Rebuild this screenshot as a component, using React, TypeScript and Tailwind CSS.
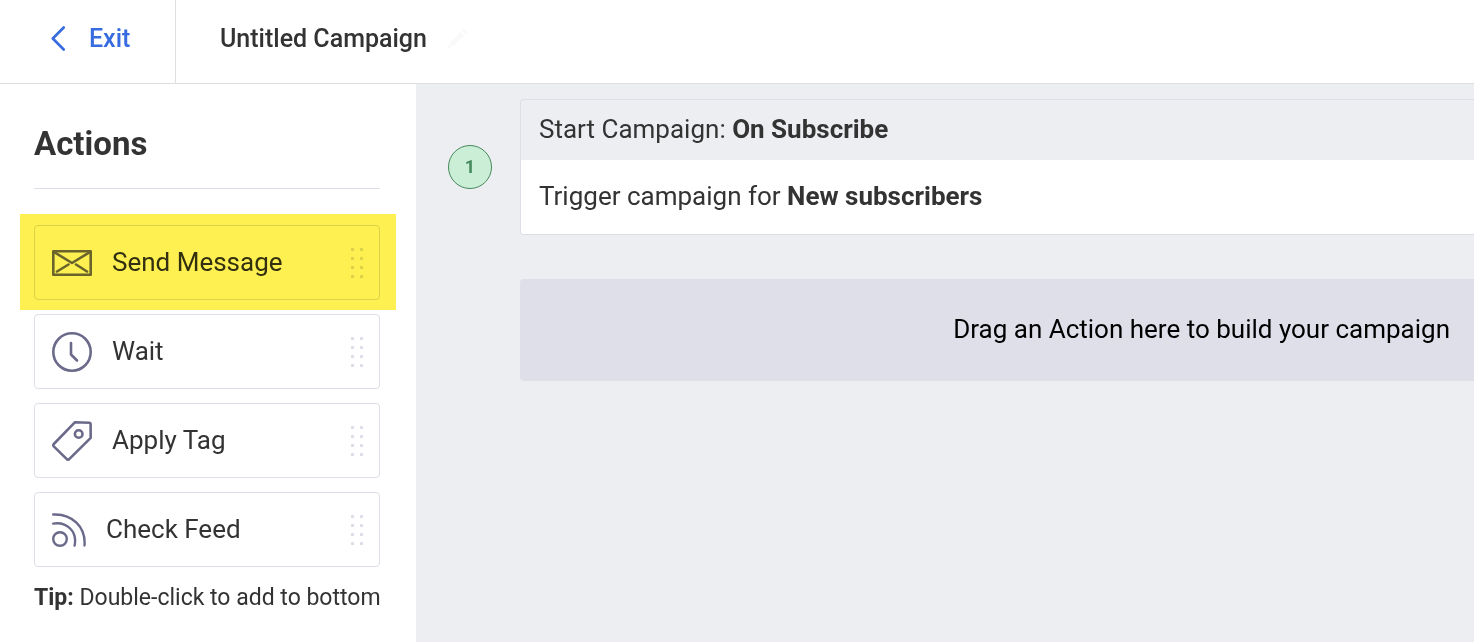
import type { ReactNode } from 'react';

const MessageIcon = () => (
  <svg width="40" height="26" viewBox="0 0 40 26" fill="none" stroke="currentColor" strokeWidth="2.6" strokeLinecap="round" strokeLinejoin="round" aria-hidden="true">
    <rect x="1.3" y="1.3" width="37.4" height="23.4" />
    <path d="M2 2l18 11L38 2M5 21.500l11.500-7M24 14.500l11 7" />
  </svg>
);

const ClockIcon = () => (
  <svg width="40" height="40" viewBox="0 0 40 40" fill="none" stroke="currentColor" strokeWidth="2.6" strokeLinecap="round" strokeLinejoin="round" aria-hidden="true">
    <circle cx="20" cy="20" r="18.700" />
    <path d="M19 11v11.500l6 6" />
  </svg>
);

const TagIcon = () => (
  <svg width="40" height="40" viewBox="0 0 40 40" fill="none" stroke="currentColor" strokeWidth="2.6" strokeLinecap="round" strokeLinejoin="round" aria-hidden="true">
    <path d="M22.800 1.300L37.600 1.800Q38.600 1.900 38.600 2.900L38.700 16.800L17.200 38.200Q16 39.200 14.800 38.200L1.800 25.300Q0.800 24.200 1.800 23Z" />
    <circle cx="26.700" cy="13" r="3.800" />
  </svg>
);

const FeedIcon = () => (
  <svg width="34" height="34" viewBox="0 0 34 34" fill="none" stroke="currentColor" strokeWidth="2.400" strokeLinecap="round" aria-hidden="true">
    <circle cx="8" cy="26" r="6.800" />
    <path d="M1.200 10.600C15 8.500 25.500 18.500 22.600 32.500" />
    <path d="M1.200 1.500C20 0.500 34 14 32.500 32.500" />
  </svg>
);

const DragDots = () => (
  <svg className="ml-auto text-[#dedee8]" width="12" height="30" viewBox="0 0 12 30" fill="currentColor" aria-hidden="true">
    {[0, 1, 2, 3].map((row) => (
      <g key={row}>
        <rect x="0" y={row * 9} width="3" height="3" rx="0.5" />
        <rect x="9" y={row * 9} width="3" height="3" rx="0.5" />
      </g>
    ))}
  </svg>
);

interface Action {
  label: string;
  icon: ReactNode;
  highlighted?: boolean;
}

const actions: Action[] = [
  { label: 'Send Message', icon: <MessageIcon />, highlighted: true },
  { label: 'Wait', icon: <ClockIcon /> },
  { label: 'Apply Tag', icon: <TagIcon /> },
  { label: 'Check Feed', icon: <FeedIcon /> },
];

const ActionItem = ({ label, icon, highlighted }: Action) => (
  <li className="relative">
    <button
      type="button"
      draggable
      className="flex h-[75px] w-full cursor-grab items-center gap-5 rounded border border-[#dedee8] bg-white pr-4 pl-[17px] text-left text-[26px] leading-8"
    >
      <span className="text-[#6b6a8a]">{icon}</span>
      <span className="pb-0.5">{label}</span>
      <DragDots />
    </button>
    {highlighted && (
      <div className="pointer-events-none absolute -top-[11px] -right-4 -bottom-2.5 -left-3.5 bg-[#fdf050] mix-blend-multiply" />
    )}
  </li>
);

const Header = () => (
  <header className="flex h-[84px] items-stretch border-b border-[#dddde2] bg-white text-[25px] font-medium leading-8">
    <a href="#exit" className="flex w-44 shrink-0 items-center gap-6 border-r border-[#dddde2] pb-1.5 pl-[51px] text-[#376be0]">
      <svg width="14" height="25" viewBox="0 0 14 25" fill="none" stroke="currentColor" strokeWidth="2.600" strokeLinecap="round" strokeLinejoin="round" aria-hidden="true">
        <path d="M12.700 1.500L1.800 12.500l10.900 11" />
      </svg>
      Exit
    </a>
    <div className="flex items-center gap-5 pb-1.5 pl-11">
      <h1>Untitled Campaign</h1>
      <button type="button" aria-label="Rename campaign" className="text-[#f9f9fa]">
        <svg width="21" height="21" viewBox="0 0 21 21" fill="currentColor" aria-hidden="true">
          <path d="M3 14.500L13.500 4l3.500 3.500L6.500 18H3zM15 2.500L17.200 0.500l3.300 3.300L18.500 6zM0 20.500l1.200-3.500 2.300 2.300z" />
        </svg>
      </button>
    </div>
  </header>
);

const Sidebar = () => (
  <aside className="w-[416px] shrink-0 bg-white pt-10 pr-9 pb-7 pl-[34px]">
    <h2 className="border-b border-[#dedee8] pb-6 text-[33px] leading-10 font-bold">Actions</h2>
    <ul className="mt-9 flex flex-col gap-3.5">
      {actions.map((action) => (
        <ActionItem key={action.label} {...action} />
      ))}
    </ul>
    <p className="mt-[15px] text-[23px] leading-8 whitespace-nowrap">
      <strong>Tip:</strong> Double-click to add to bottom
    </p>
  </aside>
);

const Canvas = () => (
  <main className="flex min-w-0 flex-1 items-start gap-7 bg-[#edeef2] pt-[15px] pl-8">
    <div className="mt-[46px] flex size-11 shrink-0 items-center justify-center rounded-full border border-[#46895c] bg-[#cbefd6] text-lg font-bold text-[#46895c]">
      1
    </div>
    <div className="min-w-0 flex-1 text-[26px] leading-8">
      <section className="overflow-hidden rounded-l border border-r-0 border-[#dedee6]">
        <h3 className="px-[18px] pt-[13px] pb-[15px]">
          Start Campaign: <strong>On Subscribe</strong>
        </h3>
        <p className="bg-white px-[18px] pt-5 pb-[22px]">
          Trigger campaign for <strong>New subscribers</strong>
        </p>
      </section>
      <div className="mt-11 flex h-[102px] items-center justify-end rounded-l bg-[#dedfe8] pr-6 pb-0.5 text-black">
        Drag an Action here to build your campaign
      </div>
    </div>
  </main>
);

export default function App() {
  return (
    <div className="flex min-h-screen flex-col overflow-hidden bg-white font-[Roboto,sans-serif] text-[#333333]">
      <Header />
      <div className="flex flex-1">
        <Sidebar />
        <Canvas />
      </div>
    </div>
  );
}
